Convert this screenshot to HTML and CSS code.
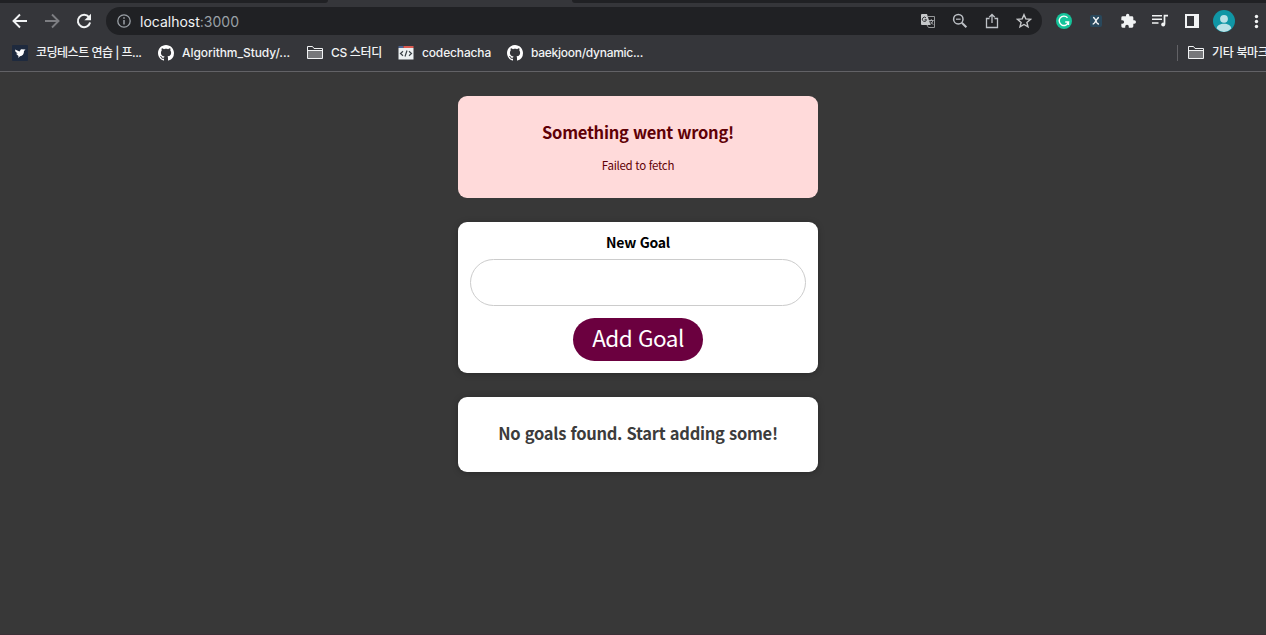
FILE: index.html
```
<!DOCTYPE html>
<html lang="ko">
<head>
    <meta charset="UTF-8">
    <meta name="viewport" content="width=device-width, initial-scale=1.0">
    <title>Goals</title>
    <link rel="stylesheet" href="styles.css">
</head>
<body>
    <!-- shared icons -->
    <svg class="sprite" aria-hidden="true">
        <symbol id="folder" viewBox="0 0 16 16">
            <path d="M1 6h14v7.5H1z" fill="#77787b"/>
            <path d="M.5 13.500V1.500h5l1.500 2h8.500v10zM.5 5.500h15" fill="none" stroke="#f1f3f4"/>
        </symbol>
        <symbol id="github" viewBox="0 0 16 16">
            <path fill="#fff" d="M8 0C3.58 0 0 3.58 0 8c0 3.54 2.29 6.53 5.47 7.59.4.07.55-.17.55-.38 0-.19-.01-.82-.01-1.49-2.01.37-2.53-.49-2.69-.94-.09-.23-.48-.94-.82-1.13-.28-.15-.68-.52-.01-.53.63-.01 1.08.58 1.23.82.72 1.21 1.87.87 2.33.66.07-.52.28-.87.51-1.07-1.78-.2-3.64-.89-3.64-3.95 0-.87.31-1.59.82-2.15-.08-.2-.36-1.02.08-2.12 0 0 .67-.21 2.2.82.64-.18 1.32-.27 2-.27s1.36.09 2 .27c1.53-1.04 2.2-.82 2.2-.82.44 1.1.16 1.92.08 2.12.51.56.82 1.27.82 2.15 0 3.07-1.87 3.75-3.65 3.95.29.25.54.73.54 1.48 0 1.07-.01 1.93-.01 2.2 0 .21.15.46.55.38A8.01 8.01 0 0 0 16 8c0-4.42-3.58-8-8-8z"/>
        </symbol>
    </svg>

    <header class="browser">
        <div class="tab-strip"><div class="tab left"></div><div class="tab right"></div></div>

        <div class="toolbar">
            <svg class="nav" viewBox="0 0 16 16"><path d="M15 8H2M8 1.5 1.5 8 8 14.5" fill="none" stroke="#f1f3f4" stroke-width="1.9"/></svg>
            <svg class="nav" viewBox="0 0 16 16"><path d="M1 8h13M8 1.5 14.5 8 8 14.5" fill="none" stroke="#7d7e82" stroke-width="1.9"/></svg>
            <svg class="nav" viewBox="0 0 16 16"><path d="M13 4.2A6.2 6.2 0 1 0 14.1 9.5" fill="none" stroke="#f1f3f4" stroke-width="2"/><path d="M15 .7v6.6H8.4z" fill="#f1f3f4"/></svg>

            <div class="address">
                <svg class="info" viewBox="0 0 14 14"><circle cx="7" cy="7" r="6.2" fill="none" stroke="#9aa0a6" stroke-width="1.3"/><path d="M7 6v4.5M7 3.3v1.5" stroke="#9aa0a6" stroke-width="1.5"/></svg>
                <span class="url">localhost<span>:3000</span></span>
                <div class="address-icons">
                    <svg viewBox="0 0 16 16"><path d="M8 3.500h6.500v11h-6L7 12" fill="none" stroke="#96989a"/><path d="M1 2a1 1 0 0 1 1-1h5l3.500 11H2a1 1 0 0 1-1-1z" fill="#c6c8ca"/><path d="M6 4.900A2.100 2.100 0 1 0 6.500 6.700H4.600" fill="none" stroke="#303134"/><path d="M8.900 7.500h4.800M11.300 6.200v1.300M12.800 7.700c-.4 1.800-1.400 2.800-2.400 3.500M10.500 8.700l2.700 3" fill="none" stroke="#a9abae"/></svg>
                    <svg viewBox="0 0 16 16"><circle cx="6.300" cy="6.200" r="4.700" fill="none" stroke="#bdc1c6" stroke-width="1.500"/><path d="m9.800 9.700 4.600 4.600" stroke="#bdc1c6" stroke-width="2"/><path d="M4 6.200h4.600" stroke="#bdc1c6" stroke-width="1.200"/></svg>
                    <svg viewBox="0 0 16 16"><path d="M5.500 5.500h-3v9h11v-9h-3" fill="none" stroke="#bdc1c6" stroke-width="1.300"/><path d="M8 10V1.800M5.200 4.300 8 1.500l2.800 2.800" fill="none" stroke="#bdc1c6" stroke-width="1.300"/></svg>
                    <svg viewBox="0 0 16 16"><path d="m8 1.700 1.800 4.200 4.700.4-3.600 3.100 1.100 4.500-4-2.400-4 2.400 1.100-4.500-3.600-3.100 4.700-.4z" fill="none" stroke="#c6c8ca" stroke-width="1.400"/></svg>
                </div>
            </div>

            <div class="extensions">
                <svg viewBox="0 0 16 16"><circle cx="8" cy="8" r="8" fill="#15c39a"/><path d="M11.500 4.700A4.700 4.700 0 1 0 12.500 9H9.200M12.500 8.500v3.500" fill="none" stroke="#fff" stroke-width="1.400"/></svg>
                <svg viewBox="0 0 16 16"><rect x="2" y="2" width="12" height="12" rx="2" fill="#29485c"/><path d="M5 4.500c3-.5 2.500 7 6 6.500M11 4.500c-2.500 0-3.500 6.500-6.300 6.500" fill="none" stroke="#f1f3f4" stroke-width="1.300"/></svg>
                <svg viewBox="0 0 24 24"><path d="M21.500 11H20V7a2 2 0 0 0-2-2h-4V3.500a2.500 2.500 0 0 0-5 0V5H4a2 2 0 0 0-2 2v3.800h1.500a2.700 2.700 0 0 1 0 5.400H2V20a2 2 0 0 0 2 2h3.800v-1.500a2.700 2.700 0 0 1 5.400 0V22H18a2 2 0 0 0 2-2v-4h1.500a2.500 2.500 0 0 0 0-5z" fill="#f1f3f4"/></svg>
                <svg viewBox="0 0 16 16"><path d="M0 2.700h10M0 6.300h10M0 10h6.500" stroke="#f1f3f4" stroke-width="1.500"/><path d="M12.500 11V2.700H16" fill="none" stroke="#f1f3f4" stroke-width="1.700"/><circle cx="11.200" cy="11.400" r="2" fill="#f1f3f4"/></svg>
                <svg viewBox="0 0 16 16"><path fill-rule="evenodd" d="M1 1h14v14H1zM3 3v10h7V3z" fill="#f1f3f4"/></svg>
                <svg class="avatar" viewBox="0 0 22 22"><circle cx="11" cy="11" r="11" fill="#1096a5"/><circle cx="11" cy="8.800" r="3.900" fill="#b9e1e6"/><path d="M3.700 18.500c0-3 3.500-4.700 7.300-4.700s7.300 1.700 7.300 4.700A10.900 10.900 0 0 1 11 22a10.900 10.900 0 0 1-7.300-3.500z" fill="#b9e1e6"/></svg>
                <svg class="menu" viewBox="0 0 16 16"><g fill="#f1f3f4"><circle cx="8.500" cy="3.500" r="1.700"/><circle cx="8.500" cy="8.500" r="1.700"/><circle cx="8.500" cy="13.500" r="1.700"/></g></svg>
            </div>
        </div>

        <nav class="bookmarks">
            <a class="bookmark coding"><svg viewBox="0 0 16 16"><rect width="16" height="16" rx="1" fill="#1e2a3e"/><path d="M3 4.500 7.500 6.500 9 4.300l4.500.2-1.500 1.500c.2 3-1.600 5-4 5.300L6.300 13l.2-2L4 8.800l1.700-.3L3.500 6.800z" fill="#fff"/></svg><span>코딩테스트 연습 | 프...</span></a>
            <a class="bookmark algorithm"><svg><use href="#github"/></svg><span>Algorithm_Study/...</span></a>
            <a class="bookmark study"><svg><use href="#folder"/></svg><span>CS 스터디</span></a>
            <a class="bookmark codechacha"><svg viewBox="0 0 16 16"><path d="M.5 1h5v2h-5z" fill="#4d6593"/><path d="M5.500 1h10v2h-10z" fill="#dc5b51"/><path d="M.5 3h15v11.500H.5z" fill="#edf1f2"/><path d="M5 6.300 2.500 8.500 5 10.700M11 6.300l2.500 2.200-2.500 2.200M9 5.500l-2 6" fill="none" stroke="#3c4348" stroke-width="1.200"/></svg><span>codechacha</span></a>
            <a class="bookmark baekjoon"><svg><use href="#github"/></svg><span>baekjoon/dynamic...</span></a>
            <a class="bookmark others"><svg><use href="#folder"/></svg><span>기타 북마크</span></a>
        </nav>
    </header>

    <main class="page">
        <section class="card error">
            <h2>Something went wrong!</h2>
            <p>Failed to fetch</p>
        </section>

        <section class="card goal-form">
            <form>
                <label for="goal">New Goal</label>
                <input type="text" id="goal">
                <button type="button">Add Goal</button>
            </form>
        </section>

        <section class="card empty">
            <h2>No goals found. Start adding some!</h2>
        </section>
    </main>
</body>
</html>
```
FILE: styles.css
```
* {
    box-sizing: border-box;
}

body {
    margin: 0;
    height: 635px;
    overflow: hidden;
    background-color: #383838;
    border-bottom: 1px solid #3b3036;
    font-family: "Noto Sans CJK KR", sans-serif;
}

.sprite {
    display: none;
}

svg {
    display: block;
    flex: none;
    width: 16px;
    height: 16px;
}

/* Browser */
.browser {
    height: 72px;
    background-color: #35363a;
    border-bottom: 1px solid #626266;
    font-family: Inter, "Noto Sans CJK KR", sans-serif;
    color: #f1f3f4;
}

.tab-strip {
    height: 3px;
    display: flex;
    justify-content: space-between;
}

.tab {
    background-color: #202124;
}

.tab.left {
    width: 328px;
    border-bottom-right-radius: 6px;
}

.tab.right {
    width: 694px;
    border-bottom-left-radius: 6px;
}

.toolbar {
    display: flex;
    align-items: center;
    height: 36px;
    padding-left: 12px;
}

.nav {
    margin-right: 16px;
}

.address {
    display: flex;
    align-items: center;
    flex: none;
    width: 936px;
    height: 28px;
    margin-left: -2px;
    padding: 0 10px 0 11px;
    border-radius: 14px;
    background-color: #202124;
}

.info {
    width: 14px;
    height: 14px;
}

.url {
    margin-left: 9px;
    font-size: 14px;
}

.url span {
    color: #9aa0a6;
}

.address-icons {
    display: flex;
    gap: 16px;
    margin-left: auto;
}

.extensions {
    display: flex;
    align-items: center;
    gap: 16px;
    margin-left: 14px;
}

.extensions .avatar {
    width: 22px;
    height: 22px;
    margin: 0 -3px;
}

.bookmarks {
    display: flex;
    align-items: center;
    height: 28px;
    padding-left: 12px;
    font-size: 12px;
    font-weight: 500;
    line-height: 16px;
}

.bookmark {
    display: flex;
    align-items: center;
    gap: 8px;
    height: 16px;
    margin-right: 16px;
    white-space: nowrap;
}

.bookmark span {
    flex: none;
}

.coding span {
    width: 106px;
    letter-spacing: -0.5px;
}

.algorithm span {
    width: 109px;
    letter-spacing: -0.06px;
}

.study span {
    width: 51px;
    letter-spacing: -0.3px;
}

.codechacha span {
    width: 69px;
    letter-spacing: -0.15px;
}

.baekjoon span {
    letter-spacing: -0.27px;
}

.others {
    width: 89px;
    margin: 0 0 0 auto;
    padding-left: 10px;
    border-left: 1px solid #626266;
    letter-spacing: -0.3px;
}

/* Page content */
.page {
    display: flex;
    flex-direction: column;
    align-items: center;
    gap: 24px;
    width: 1276px;
    padding-top: 24px;
}

.card {
    width: 360px;
    border-radius: 9px;
    background-color: #fff;
    box-shadow: 0 1px 6px rgba(0, 0, 0, 0.26);
    text-align: center;
}

.card h2 {
    margin: 0;
    font-size: 16.5px;
    line-height: 24px;
    font-weight: 700;
    letter-spacing: -0.27px;
}

.error {
    height: 102px;
    padding-top: 24px;
    background-color: #ffdada;
    box-shadow: none;
    color: #5f0006;
}

.error p {
    margin: 12px 0 0;
    font-size: 11.5px;
    line-height: 18px;
    letter-spacing: -0.3px;
}

.goal-form {
    height: 151px;
    padding: 11px 12px 12px;
}

.goal-form form {
    display: flex;
    flex-direction: column;
    align-items: center;
}

.goal-form label {
    font-size: 14px;
    line-height: 18px;
    font-weight: 700;
    letter-spacing: -0.25px;
}

.goal-form input {
    width: 336px;
    height: 47px;
    margin: 8px 0 12px;
    border: 1px solid #ccc;
    border-radius: 24px;
}

.goal-form button {
    width: 130px;
    height: 43px;
    padding: 0 0 6px;
    border: 0;
    border-radius: 22px;
    background-color: #6b003f;
    color: #fff;
    font: 22.5px "Noto Sans CJK KR", sans-serif;
    letter-spacing: -0.5px;
}

.empty {
    height: 75px;
    padding-top: 24px;
    color: #3c3c3c;
}
```
